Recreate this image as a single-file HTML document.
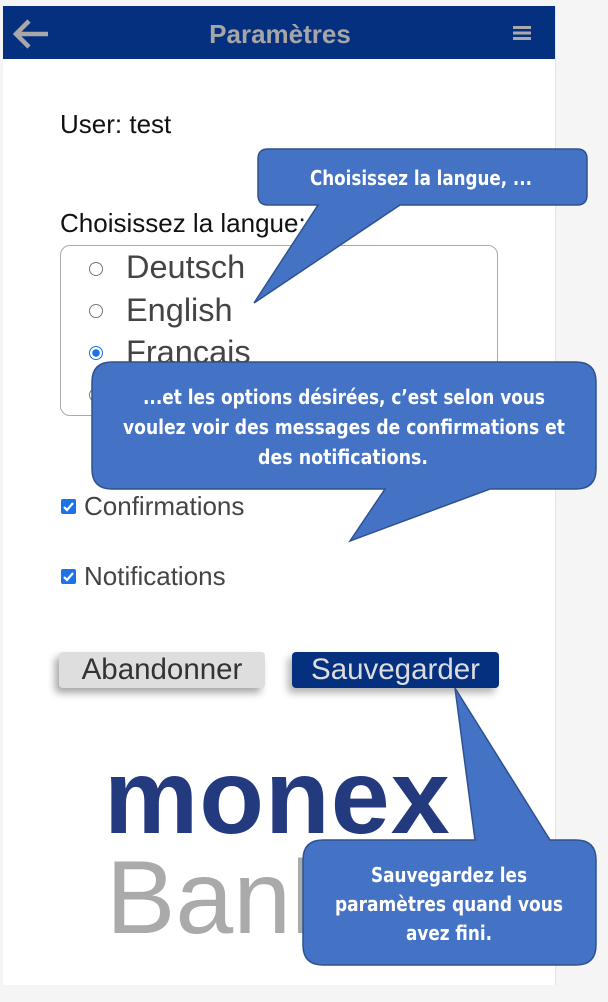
<!DOCTYPE html>
<html><head><meta charset="utf-8"><style>
body{margin:0;width:608px;height:1002px;background:#f5f5f5;position:relative;overflow:hidden;font-family:"Liberation Sans",sans-serif;}
.panel{position:absolute;left:3px;top:6px;width:552px;height:979px;background:#fff;border-right:1px solid #e4e4e4;}
.hdr{position:absolute;left:3px;top:6px;width:552px;height:53px;background:#053080;}
.t{position:absolute;white-space:nowrap;}
.radio{position:absolute;width:14px;height:14px;border:1px solid #777;border-radius:50%;box-sizing:border-box;background:#fff}
.cb{position:absolute;left:61px;width:15px;height:15px;background:#1a73e8;border-radius:2px}
</style></head><body>
<div class="panel"></div>
<div class="hdr"></div>
<svg class="t" style="left:12px;top:18px" width="40" height="32" viewBox="0 0 40 32"><path d="M36 16H5M17 3L4 16l13 13" stroke="#a8a8a8" stroke-width="4.5" fill="none"/></svg>
<div class="t" style="left:0;width:560px;text-align:center;top:19px;font-size:26px;font-weight:bold;color:#a6a6a6">Paramètres</div>
<div class="t" style="left:513px;top:26px;width:18px;height:14px;background:linear-gradient(#aaa 0 3px,transparent 3px 5.5px,#aaa 5.5px 8.5px,transparent 8.5px 11px,#aaa 11px 14px)"></div>
<div class="t" style="left:60px;top:109px;font-size:26px;color:#111">User: test</div>
<div class="t" style="left:60px;top:208px;font-size:26px;color:#111">Choisissez la langue:</div>
<div class="t" style="left:60px;top:245px;width:438px;height:171px;border:1px solid #aaa;border-radius:10px;box-sizing:border-box;overflow:hidden">
 <div class="radio" style="left:28px;top:16px"></div>
 <div class="radio" style="left:28px;top:58px"></div>
 <div class="radio" style="left:28px;top:100px;border:1.5px solid #1a73e8;background:radial-gradient(#1a73e8 0 3.5px,#fff 4px)"></div>
 <div class="radio" style="left:28px;top:142px"></div>
 <div class="t" style="left:65px;top:3px;font-size:32.5px;color:#444">Deutsch</div>
 <div class="t" style="left:65px;top:46px;font-size:32.5px;color:#444">English</div>
 <div class="t" style="left:65px;top:88px;font-size:32.5px;color:#444">Francais</div>
</div>
<div class="cb" style="top:499px"></div><svg class="t" style="left:61px;top:499px" width="15" height="15"><path d="M3 8l3 3 6-7" stroke="#fff" stroke-width="2.2" fill="none"/></svg>
<div class="t" style="left:84px;top:491px;font-size:26px;color:#444">Confirmations</div>
<div class="cb" style="top:569px"></div><svg class="t" style="left:61px;top:569px" width="15" height="15"><path d="M3 8l3 3 6-7" stroke="#fff" stroke-width="2.2" fill="none"/></svg>
<div class="t" style="left:84px;top:561px;font-size:26px;color:#444">Notifications</div>
<div class="t" style="left:59px;top:652px;width:206px;height:36px;background:#dedede;border-radius:4px;box-shadow:-4px 5px 8px rgba(0,0,0,.35);text-align:center;line-height:36px;font-size:29.5px;color:#333">Abandonner</div>
<div class="t" style="left:292px;top:652px;width:207px;height:36px;background:#053080;border-radius:4px;box-shadow:-4px 5px 8px rgba(0,0,0,.3);text-align:center;line-height:36px;font-size:29.5px;color:#ddd">Sauvegarder</div>
<div class="t" style="left:104px;top:744px;font-size:106px;font-weight:bold;color:#233a7e;letter-spacing:1px;line-height:1">monex</div>
<div class="t" style="left:106px;top:846px;font-size:104px;color:#aaa;line-height:1">Bank</div>
<svg class="t" style="left:0;top:0" width="608" height="1002">
<g fill="#4472c4" stroke="#2f528f" stroke-width="1.5">
<path d="M270 149H577Q587 149 587 159V195Q587 205 577 205H400L254 303L318 205H268Q258 205 258 195V159Q258 149 268 149Z"/>
<path d="M112 362H576Q596 362 596 382V469Q596 489 576 489H490L350 541L385 489H112Q92 489 92 469V382Q92 362 112 362Z"/>
<path d="M323 840H475L455 688L550 840H576Q596 840 596 860V945Q596 965 576 965H323Q303 965 303 945V860Q303 840 323 840Z"/>
</g>
<g fill="#fff" font-family="'DejaVu Sans Condensed','Liberation Sans Narrow',sans-serif" font-weight="bold" font-size="20">
<text x="310" y="185" textLength="222" lengthAdjust="spacingAndGlyphs">Choisissez la langue, ...</text>
<text x="143" y="404" textLength="402" lengthAdjust="spacingAndGlyphs">...et les options désirées, c’est selon vous</text>
<text x="123" y="434" textLength="442" lengthAdjust="spacingAndGlyphs">voulez voir des messages de confirmations et</text>
<text x="258" y="464" textLength="170" lengthAdjust="spacingAndGlyphs">des notifications.</text>
<text x="371" y="882" textLength="156" lengthAdjust="spacingAndGlyphs">Sauvegardez les</text>
<text x="335" y="911" textLength="228" lengthAdjust="spacingAndGlyphs">paramètres quand vous</text>
<text x="406" y="940" textLength="86" lengthAdjust="spacingAndGlyphs">avez fini.</text>
</g></svg>
</body></html>
